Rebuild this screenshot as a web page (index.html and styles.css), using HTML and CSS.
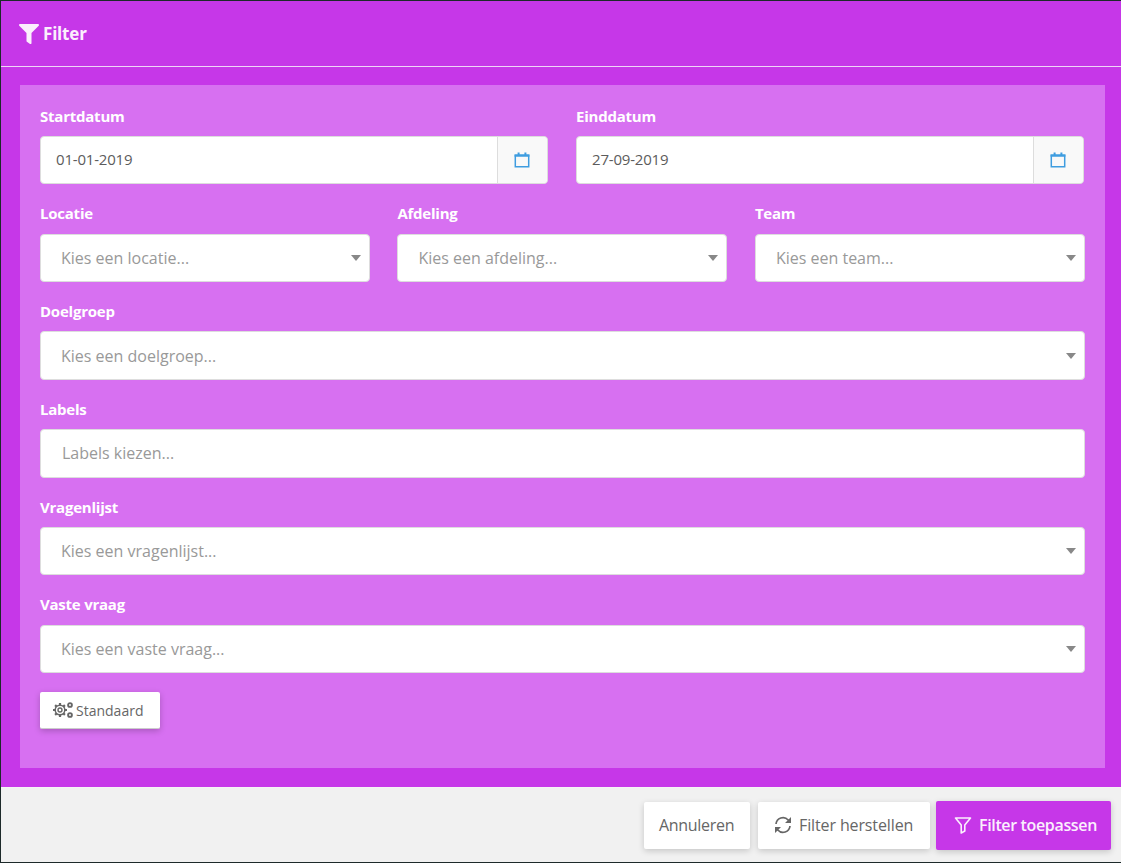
FILE: index.html
```html
<!DOCTYPE html>
<html lang="nl">
<head>
<meta charset="utf-8">
<title>Filter</title>
<link rel="stylesheet" href="styles.css">
</head>
<body>
<div class="modal">
  <header class="modal-header">
    <svg class="icon-head" viewBox="0 0 512 512"><path fill="currentColor" d="M487 0H25C3 0-9 27 7 43l185 185v206c0 8 4 15 10 20l80 56c16 11 38 0 38-20V228L505 43c16-16 4-43-18-43z"/></svg>
    <h1 class="modal-title">Filter</h1>
  </header>
  <div class="modal-body">
    <form class="panel">
      <div class="row row-2">
        <div class="field">
          <label class="label">Startdatum</label>
          <div class="control date"><span class="value">01-01-2019</span><span class="addon"><svg class="cal" viewBox="0 0 16 16"><path fill="none" stroke="currentColor" stroke-width="1.5" d="M1.3 3.3h13.4v11.4H1.3z"/><path fill="currentColor" d="M.6 2.6h14.8v2.2H.6zM3.6.4h2V3h-2zM10.4.4h2V3h-2z"/></svg></span></div>
        </div>
        <div class="field">
          <label class="label">Einddatum</label>
          <div class="control date"><span class="value">27-09-2019</span><span class="addon"><svg class="cal" viewBox="0 0 16 16"><path fill="none" stroke="currentColor" stroke-width="1.5" d="M1.3 3.3h13.4v11.4H1.3z"/><path fill="currentColor" d="M.6 2.6h14.8v2.2H.6zM3.6.4h2V3h-2zM10.4.4h2V3h-2z"/></svg></span></div>
        </div>
      </div>
      <div class="row row-3">
        <div class="field"><label class="label">Locatie</label><div class="control select"><span class="placeholder">Kies een locatie...</span><i class="caret"></i></div></div>
        <div class="field"><label class="label">Afdeling</label><div class="control select"><span class="placeholder">Kies een afdeling...</span><i class="caret"></i></div></div>
        <div class="field"><label class="label">Team</label><div class="control select"><span class="placeholder">Kies een team...</span><i class="caret"></i></div></div>
      </div>
      <div class="field"><label class="label">Doelgroep</label><div class="control select"><span class="placeholder">Kies een doelgroep...</span><i class="caret"></i></div></div>
      <div class="field"><label class="label">Labels</label><div class="control tags"><span class="placeholder">Labels kiezen...</span></div></div>
      <div class="field"><label class="label">Vragenlijst</label><div class="control select"><span class="placeholder">Kies een vragenlijst...</span><i class="caret"></i></div></div>
      <div class="field"><label class="label">Vaste vraag</label><div class="control select"><span class="placeholder">Kies een vaste vraag...</span><i class="caret"></i></div></div>
      <button type="button" class="btn-default">
        <svg class="gears" viewBox="0 0 20 16"><g fill="none" stroke="currentColor"><circle cx="7" cy="8" r="2" stroke-width="1.4"/><circle cx="7" cy="8" r="4.8" stroke-width="1.5"/><path stroke-width="2.2" d="M7 1v2.4M7 12.6V15M0 8h2.4M11.6 8H14M2.1 3.1l1.7 1.7M11.9 3.1l-1.7 1.7M2.1 12.9l1.7-1.7M11.9 12.9l-1.7-1.7"/><circle cx="17" cy="3" r="1.9" stroke-width="1.9"/><circle cx="17" cy="13" r="1.9" stroke-width="1.9"/></g></svg>
        <span>Standaard</span>
      </button>
    </form>
  </div>
  <footer class="modal-footer">
    <button type="button" class="btn btn-cancel">Annuleren</button>
    <button type="button" class="btn btn-reset">
      <svg class="icon-btn" viewBox="0 0 18 18"><g fill="none" stroke="currentColor" stroke-width="1.7"><path d="M2 8a7 7 0 0 1 12.2-4L16 6"/><path d="M16 10a7 7 0 0 1-12.2 4L2 12"/></g><path fill="currentColor" d="M17 1v6h-6zM1 17v-6h6z"/></svg>
      Filter herstellen
    </button>
    <button type="button" class="btn btn-primary">
      <svg class="icon-btn" viewBox="0 0 18 18"><path fill="none" stroke="currentColor" stroke-width="1.6" stroke-linejoin="round" d="M1.5 2h15l-5.7 7v6l-3.6 2V9z"/></svg>
      Filter toepassen
    </button>
  </footer>
</div>
</body>
</html>
```
FILE: styles.css
```css
* { box-sizing: border-box; }
html, body { margin: 0; height: 100%; }
body {
  background: #1d2a2a;
  font-family: "Open Sans", "Noto Sans", sans-serif;
  overflow: hidden;
}
.modal {
  margin: 1px 0 1px 1px;
  height: 861px;
  display: flex;
  flex-direction: column;
  background: #c637e8;
}
.modal-header {
  height: 66px;
  display: flex;
  align-items: center;
  gap: 4px;
  padding: 0 0 0 18px;
  color: #fbeffd;
  border-bottom: 1px solid #efd5f7;
  flex: none;
}
.icon-head { width: 20px; height: 20px; }
.modal-title { margin: 0; font-size: 17px; font-weight: 700; letter-spacing: -0.2px; }
.modal-body {
  flex: none;
  height: 720px;
  padding: 18px 16px 19px 19px;
}
.panel {
  height: 683px;
  background: #d770f1;
  padding: 21.72px 20px 0 20px;
  display: flex;
  flex-direction: column;
  gap: 20px;
}
.row { display: grid; }
.row-2 { grid-template-columns: 508px 508px; column-gap: 28px; }
.row-3 { grid-template-columns: 329.9px 330px 330px; column-gap: 27.5px; }
.label {
  display: block;
  height: 29.22px;
  line-height: 18px;
  font-size: 15px;
  font-weight: 700;
  letter-spacing: -0.23px;
  color: #fff;
}
.control {
  height: 48.54px;
  background: #fff;
  border: 1px solid #ddd;
  border-radius: 4px;
  display: flex;
  align-items: center;
  font-size: 16px;
  position: relative;
}
.date { padding-left: 15px; }
.value { flex: 1; color: #5c5c5c; font-size: 15px; letter-spacing: -0.2px; padding-bottom: 3px; }
.addon {
  width: 50px;
  height: 100%;
  padding-right: 2px;
  background: #f9f9f9;
  border-left: 1px solid #ddd;
  border-radius: 0 4px 4px 0;
  display: flex;
  align-items: center;
  justify-content: center;
  color: #3f9de0;
}
.cal { width: 16px; height: 16px; }
.select { padding-left: 20px; padding-right: 34px; }
.tags { padding-left: 21px; }
.placeholder { color: #999; }
.caret {
  position: absolute;
  right: 8px;
  top: 50%;
  margin-top: -3px;
  border-left: 5px solid transparent;
  border-right: 5px solid transparent;
  border-top: 6px solid #888;
}
.btn-default {
  align-self: flex-start;
  width: 120px;
  height: 37px;
  margin-top: -1px;
  display: flex;
  align-items: center;
  gap: 3px;
  padding: 0 0 0 13px;
  background: #fff;
  border: 0;
  border-bottom: 1px solid #ccc;
  border-radius: 2px;
  box-shadow: 0 2px 6px rgba(0,0,0,.22);
  color: #666;
  font: 14px "Open Sans", sans-serif;
}
.gears { width: 20px; height: 16px; }
.modal-footer {
  flex: 1;
  background: #f1f1f1;
  display: flex;
  justify-content: flex-end;
  align-items: flex-start;
  padding: 14px 10px 0 0;
  border-top: 1px solid #f4f4f4;
}
.btn {
  height: 47px;
  display: flex;
  align-items: center;
  gap: 7px;
  background: #fff;
  border: 0;
  border-radius: 2px;
  box-shadow: 0 2px 6px rgba(0,0,0,.18);
  color: #666;
  font: 16px "Open Sans", sans-serif;
  letter-spacing: -0.12px;
  white-space: nowrap;
  padding-bottom: 3px;
}
.btn-cancel { width: 106px; padding-left: 15px; padding-right: 15px; margin-right: 8px; letter-spacing: -0.3px; }
.btn-reset { width: 172px; padding-left: 16px; padding-right: 15px; margin-right: 6px; }
.btn-primary {
  width: 175px;
  padding-left: 18px;
  padding-right: 0;
  background: #c637e8;
  color: #fbeffd;
  height: 49px;
  margin-top: -1px;
  font-weight: 600;
  letter-spacing: -0.35px;
}
.icon-btn { width: 18px; height: 18px; flex: none; }
```
